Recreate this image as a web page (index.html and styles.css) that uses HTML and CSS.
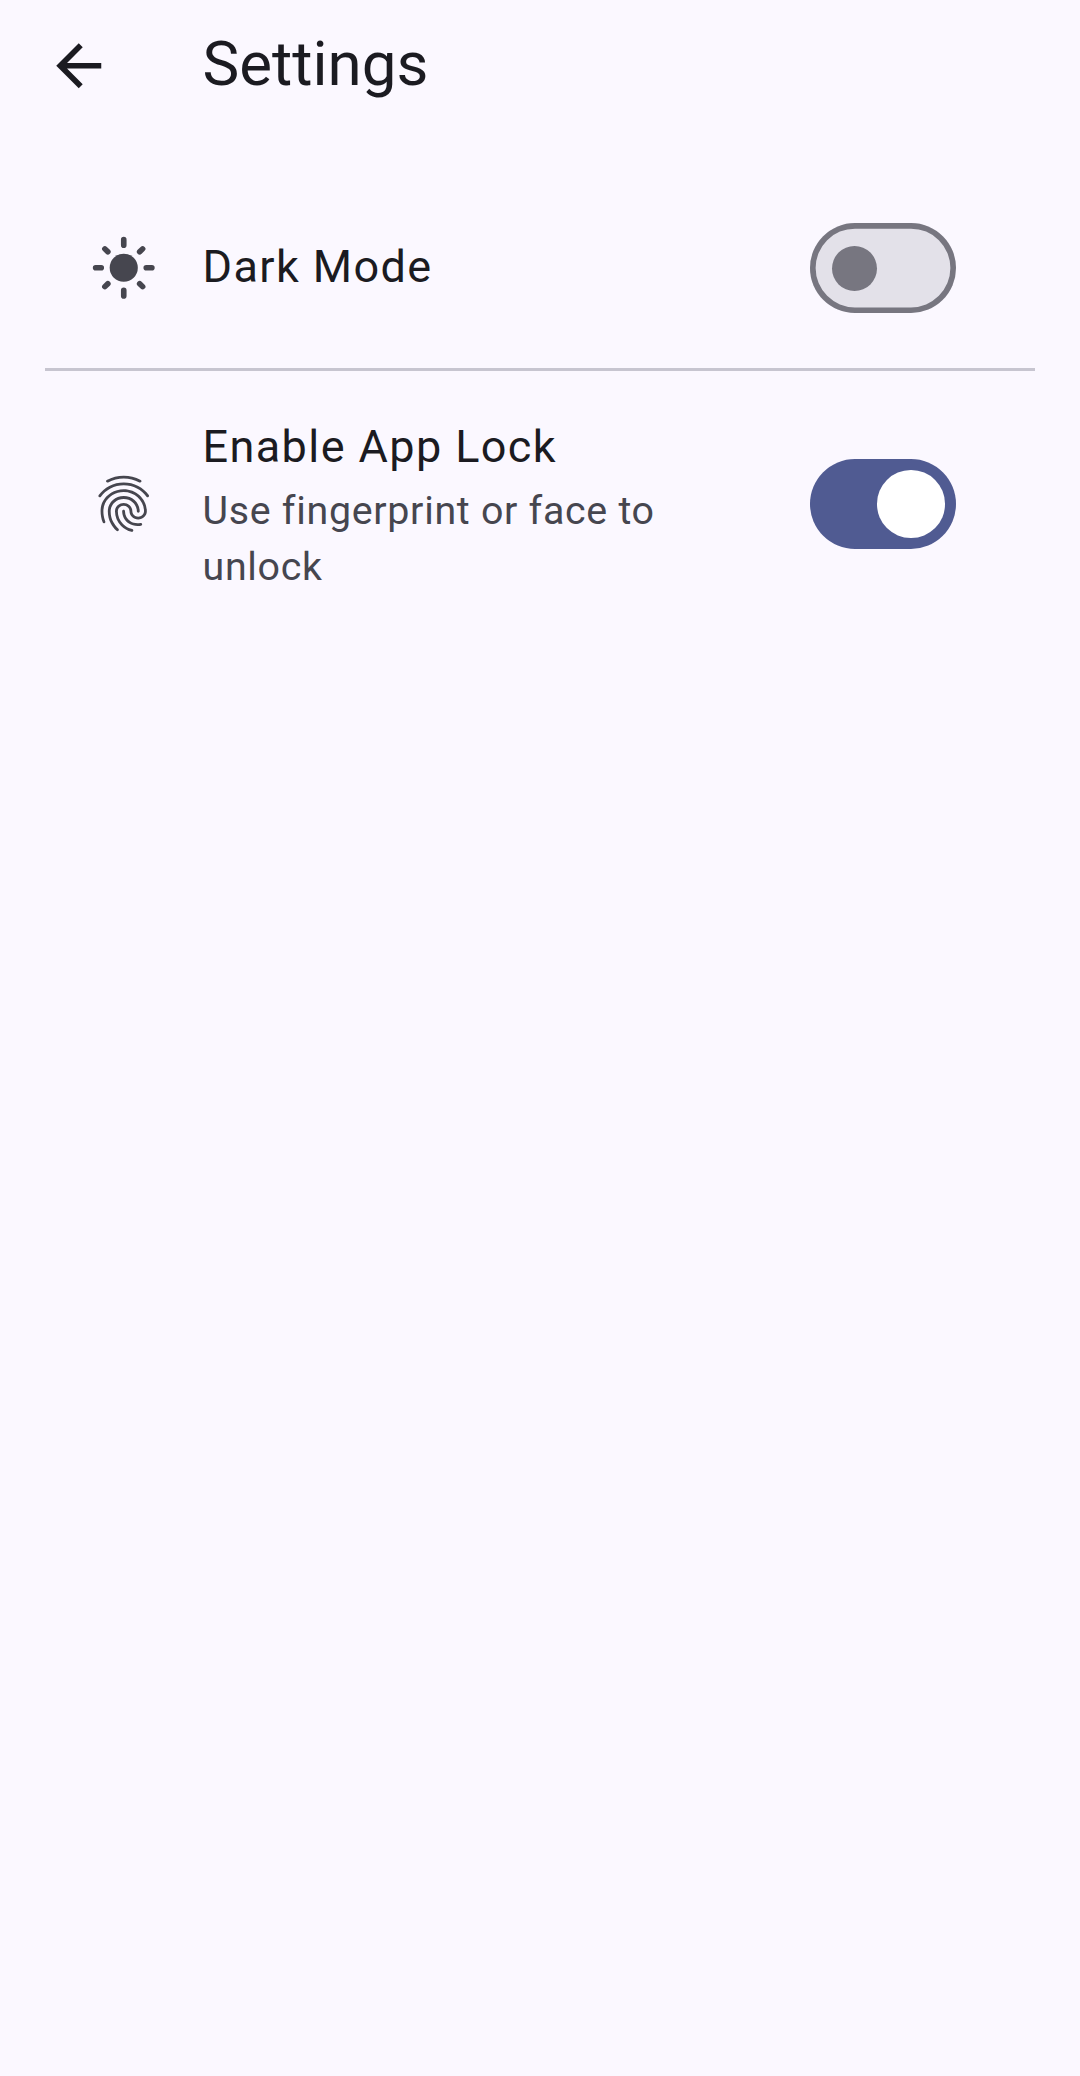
FILE: index.html
```html
<!DOCTYPE html>
<html lang="en">
<head>
<meta charset="utf-8">
<title>Settings</title>
<link rel="stylesheet" href="styles.css">
</head>
<body>
<header class="app-bar">
  <svg class="icon icon-back" viewBox="0 0 24 24"><path d="M20 11H7.83l5.59-5.59L12 4l-8 8 8 8 1.41-1.41L7.83 13H20v-2z"/></svg>
  <h1 class="app-title">Settings</h1>
</header>
<main class="settings">
  <section class="row row-theme">
    <svg class="icon" viewBox="0 0 24 24"><circle cx="12" cy="12" r="5"/><path class="rays" d="M2 12h2M20 12h2M12 2v2M12 20v2M5.285 5.285l1.06 1.06M17.655 17.655l1.06 1.06M18.715 5.285l-1.06 1.06M6.345 17.655l-1.06 1.06"/></svg>
    <div class="label"><div class="title">Dark Mode</div></div>
    <div class="switch" role="switch" aria-checked="false"><span class="thumb"></span></div>
  </section>
  <section class="row row-lock">
    <svg class="icon" viewBox="0 0 24 24"><path d="M17.81 4.47c-.08 0-.16-.02-.23-.06C15.66 3.42 14 3 12.01 3c-1.98 0-3.86.47-5.57 1.41-.24.13-.54.04-.68-.2-.13-.24-.04-.55.2-.68C7.82 2.52 9.86 2 12.01 2c2.13 0 3.99.47 6.03 1.52.25.13.34.43.21.67-.09.18-.26.28-.44.28zM3.5 9.72c-.1 0-.2-.03-.29-.09-.23-.16-.28-.47-.12-.7.99-1.4 2.25-2.5 3.75-3.27C9.98 4.04 14 4.03 17.15 5.65c1.5.77 2.76 1.86 3.75 3.25.16.22.11.54-.12.7-.23.16-.54.11-.7-.12-.9-1.26-2.04-2.25-3.39-2.94-2.87-1.47-6.54-1.47-9.4.01-1.36.7-2.5 1.7-3.4 2.96-.08.14-.23.21-.39.21zm6.25 12.07c-.13 0-.26-.05-.35-.15-.87-.87-1.34-1.43-2.01-2.64-.69-1.23-1.05-2.73-1.05-4.34 0-2.97 2.54-5.39 5.66-5.39s5.66 2.42 5.66 5.39c0 .28-.22.5-.5.5s-.5-.22-.5-.5c0-2.42-2.09-4.39-4.66-4.39-2.57 0-4.66 1.97-4.66 4.39 0 1.44.32 2.77.93 3.85.64 1.15 1.08 1.64 1.85 2.42.19.2.19.51 0 .71-.11.1-.24.15-.37.15zm7.17-1.85c-1.19 0-2.24-.3-3.1-.89-1.49-1.01-2.38-2.65-2.38-4.39 0-.28.22-.5.5-.5s.5.22.5.5c0 1.41.72 2.74 1.94 3.56.71.48 1.54.71 2.54.71.24 0 .64-.03 1.04-.1.27-.05.53.13.58.41.05.27-.13.53-.41.58-.57.11-1.07.12-1.21.12zM14.91 22c-.04 0-.09-.01-.13-.02-1.59-.44-2.63-1.03-3.72-2.1-1.4-1.39-2.17-3.24-2.17-5.22 0-1.62 1.38-2.94 3.08-2.94 1.7 0 3.08 1.32 3.08 2.94 0 1.07.93 1.94 2.08 1.94s2.08-.87 2.08-1.94c0-3.77-3.25-6.83-7.25-6.83-2.84 0-5.44 1.58-6.61 4.03-.39.81-.59 1.76-.59 2.8 0 .78.07 2.01.67 3.61.1.26-.03.55-.29.64-.26.1-.55-.04-.64-.29-.49-1.31-.73-2.61-.73-3.96 0-1.2.23-2.29.68-3.24 1.33-2.79 4.28-4.6 7.51-4.6 4.55 0 8.25 3.51 8.25 7.83 0 1.62-1.38 2.94-3.08 2.94s-3.08-1.32-3.08-2.94c0-1.07-.93-1.94-2.08-1.94s-2.08.87-2.08 1.94c0 1.71.66 3.31 1.87 4.51.95.94 1.86 1.46 3.27 1.85.27.07.42.35.35.61-.05.23-.26.38-.47.38z"/></svg>
    <div class="label">
      <div class="title">Enable App Lock</div>
      <div class="subtitle">Use fingerprint or face to unlock</div>
    </div>
    <div class="switch switch-on" role="switch" aria-checked="true"><span class="thumb"></span></div>
  </section>
</main>
</body>
</html>
```
FILE: styles.css
```css
* { box-sizing: border-box; }
body {
  margin: 0;
  min-height: 2076px;
  background: #fbf8ff;
  color: #1b1b21;
  font-family: Roboto, sans-serif;
}
.app-bar {
  display: flex;
  align-items: center;
  height: 132px;
  padding-left: 45px;
}
.icon {
  flex: none;
  width: 67.5px;
  height: 67.5px;
  fill: #46464f;
}
.icon-back { fill: #1b1b21; }
.rays {
  fill: none;
  stroke: #46464f;
  stroke-width: 2;
  stroke-linecap: round;
}
.app-title {
  margin: 0 0 4px 90px;
  font-size: 61.875px;
  font-weight: 400;
  line-height: 79px;
}
.settings { padding: 0 45px; }
.row {
  display: flex;
  align-items: center;
  padding: 0 79px 0 45px;
}
.row-theme {
  height: 239px;
  padding-top: 36px;
  border-bottom: 3px solid #c7c5d0;
}
.row-theme .label { margin-bottom: 2px; }
.row-lock { height: 266px; }
.label {
  flex: 1;
  margin-left: 45px;
  padding-right: 90px;
}
.title {
  font-size: 45px;
  line-height: 67.5px;
  letter-spacing: 1.406px;
}
.subtitle {
  margin-top: 3px;
  color: #46464f;
  font-size: 39.375px;
  line-height: 56.25px;
  letter-spacing: 0.703px;
}
.switch {
  display: flex;
  align-items: center;
  flex: none;
  width: 146px;
  height: 90px;
  padding-left: 22.4px;
  border-radius: 45px;
  background: #e3e1e9;
  box-shadow: inset 0 0 0 5.625px #777680;
}
.thumb {
  width: 45px;
  height: 45px;
  border-radius: 50%;
  background: #777680;
}
.switch-on {
  justify-content: flex-end;
  padding: 0 11.25px;
  background: #505b92;
  box-shadow: none;
}
.switch-on .thumb {
  width: 67.5px;
  height: 67.5px;
  background: #fff;
}
```
